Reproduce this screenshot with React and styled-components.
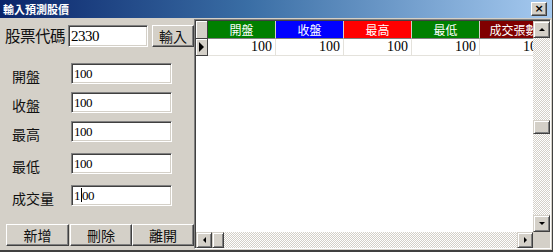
import styled, { createGlobalStyle } from "styled-components";

const GlobalStyle = createGlobalStyle`
  html, body {
    margin: 0;
    padding: 0;
    background: #d4d0c8;
  }
`;

const Window = styled.div`
  width: 553px;
  height: 252px;
  box-sizing: border-box;
  background: #d4d0c8;
  border-right: 1px solid #404040;
  border-bottom: 2px solid #404040;
  display: flex;
  flex-direction: column;
  font-family: "Noto Sans CJK TC", "Noto Sans", sans-serif;
  overflow: hidden;
`;

const TitleBar = styled.div`
  height: 18px;
  flex: none;
  display: flex;
  align-items: center;
  justify-content: space-between;
  padding: 0 4px 0 3px;
  background: linear-gradient(to right, #0a246a, #3a6ea5 45%, #a6caf0);
  color: #fff;
  font-size: 11px;
  font-weight: bold;
  line-height: 18px;
`;

const CloseButton = styled.div`
  width: 16px;
  height: 14px;
  box-sizing: border-box;
  background: #d4d0c8;
  border-top: 1px solid #fff;
  border-left: 1px solid #fff;
  border-right: 1px solid #404040;
  border-bottom: 1px solid #404040;
  box-shadow: inset -1px -1px #808080;
  color: #000;
  font-family: "DejaVu Sans", sans-serif;
  font-size: 11px;
  font-weight: bold;
  line-height: 11px;
  text-align: center;
  margin-right: 1px;
`;

const Body = styled.div`
  flex: 1;
  display: flex;
  min-height: 0;
`;

const LeftPanel = styled.div`
  width: 194px;
  flex: none;
  display: flex;
  flex-direction: column;
  box-sizing: border-box;
  padding: 7px 0 0 5px;
`;

const CodeRow = styled.div`
  display: flex;
  align-items: center;
  height: 21px;
`;

const CodeLabel = styled.div`
  width: 63px;
  font-size: 15.5px;
  line-height: 21px;
  color: #111;
  letter-spacing: -0.5px;
`;

const TextBox = styled.div`
  width: ${(p) => p.$width}px;
  height: ${(p) => p.$height}px;
  box-sizing: border-box;
  background: #fff;
  border-top: 1px solid #808080;
  border-left: 1px solid #808080;
  border-right: 1px solid #fff;
  border-bottom: 1px solid #fff;
  box-shadow: inset 1px 1px #404040, inset -1px -1px #d4d0c8;
  padding-left: 2px;
  font-family: "Liberation Serif", serif;
  font-size: ${(p) => p.$size}px;
  line-height: ${(p) => p.$height - 2}px;
  color: #000;
  letter-spacing: -0.5px;
  white-space: nowrap;
  overflow: hidden;
  display: flex;
  align-items: center;
`;

const Caret = styled.span`
  display: inline-block;
  width: 1px;
  height: 14px;
  background: #000;
  margin: 0 0.5px 0 0.5px;
`;

const Button = styled.div`
  width: ${(p) => p.$width}px;
  height: ${(p) => p.$height}px;
  box-sizing: border-box;
  background: #d4d0c8;
  border-top: 1px solid #fff;
  border-left: 1px solid #fff;
  border-right: 1px solid #404040;
  border-bottom: 1px solid #404040;
  box-shadow: inset -1px -1px #808080;
  display: flex;
  align-items: center;
  justify-content: center;
  font-size: 14px;
  color: #111;
  margin-left: ${(p) => p.$left || 0}px;
`;

const FieldList = styled.div`
  display: flex;
  flex-direction: column;
  padding-left: 7px;
`;

const FieldRow = styled.div`
  display: flex;
  align-items: center;
  height: 20px;
  margin-top: ${(p) => p.$top}px;
`;

const FieldLabel = styled.div`
  width: 59px;
  font-size: 14px;
  color: #111;
  line-height: 20px;
  padding-top: 5px;
`;

const ButtonRow = styled.div`
  display: flex;
  margin-top: 19px;
  padding-left: 1px;
`;

const GridFrame = styled.div`
  width: 357px;
  height: 230px;
  margin-top: 1px;
  box-sizing: border-box;
  border-top: 1px solid #808080;
  border-left: 1px solid #808080;
  border-right: 1px solid #fff;
  border-bottom: 1px solid #fff;
  box-shadow: inset 1px 1px #404040;
  padding: 1px 0 0 1px;
  display: flex;
  flex-direction: column;
  background: #fff;
`;

const GridTop = styled.div`
  flex: 1;
  display: flex;
  min-height: 0;
`;

const Cells = styled.div`
  flex: 1;
  overflow: hidden;
  background: #fff;
`;

const Row = styled.div`
  display: flex;
  height: ${(p) => p.$height}px;
  white-space: nowrap;
`;

const Selector = styled.div`
  width: 12px;
  flex: none;
  box-sizing: border-box;
  background: #d4d0c8;
  border-right: 1px solid #404040;
  border-bottom: 1px solid #404040;
  box-shadow: inset 1px 1px #fff;
  display: flex;
  align-items: center;
  justify-content: center;
`;

const HeaderCell = styled.div`
  width: 68px;
  flex: none;
  box-sizing: border-box;
  background: ${(p) => p.$color};
  border-right: 1px solid #d4d0c8;
  border-bottom: 1px solid #808080;
  color: #fff;
  font-size: 12px;
  line-height: 17px;
  text-align: center;
  overflow: hidden;
`;

const DataCell = styled.div`
  width: 68px;
  flex: none;
  box-sizing: border-box;
  border-right: 1px solid #e4e2dc;
  border-bottom: 1px solid #e4e2dc;
  font-family: "Liberation Serif", serif;
  font-size: 14px;
  line-height: 16px;
  text-align: right;
  padding-right: 3px;
  color: #000;
  overflow: hidden;
`;

const VScroll = styled.div`
  width: 17px;
  flex: none;
  display: flex;
  flex-direction: column;
  background: repeating-conic-gradient(#d4d0c8 0% 25%, #ffffff 0% 50%) 0 0 / 2px 2px;
`;

const ScrollButton = styled.div`
  width: ${(p) => p.$w}px;
  height: ${(p) => p.$h}px;
  flex: none;
  box-sizing: border-box;
  background: #d4d0c8;
  border-top: 1px solid #d4d0c8;
  border-left: 1px solid #d4d0c8;
  border-right: 1px solid #404040;
  border-bottom: 1px solid #404040;
  box-shadow: inset 1px 1px #fff, inset -1px -1px #808080;
  display: flex;
  align-items: center;
  justify-content: center;
`;

const Track = styled.div`
  flex: ${(p) => (p.$fixed ? "none" : 1)};
  ${(p) => (p.$fixed ? `height: ${p.$fixed}px;` : "")}
`;

const GridBottom = styled.div`
  height: 16px;
  flex: none;
  display: flex;
`;

const HScroll = styled.div`
  flex: 1;
  display: flex;
  background: repeating-conic-gradient(#d4d0c8 0% 25%, #ffffff 0% 50%) 0 0 / 2px 2px;
`;

const Corner = styled.div`
  width: 17px;
  flex: none;
  background: #d4d0c8;
`;

const Arrow = ({ dir, size = 4 }) => {
  const s = size;
  const pts = {
    up: `0,${s} ${s},0 ${2 * s},${s}`,
    down: `0,0 ${s},${s} ${2 * s},0`,
    left: `${s},0 0,${s} ${s},${2 * s}`,
    right: `0,0 ${s},${s} 0,${2 * s}`,
  }[dir];
  const vertical = dir === "up" || dir === "down";
  return (
    <svg width={vertical ? 2 * s : s} height={vertical ? s : 2 * s}>
      <polygon points={pts} fill="#000" />
    </svg>
  );
};

const headers = [
  { text: "開盤", color: "#008000" },
  { text: "收盤", color: "#0000ff" },
  { text: "最高", color: "#ff0000" },
  { text: "最低", color: "#008000" },
  { text: "成交張數", color: "#800000" },
];

const fields = [
  { label: "開盤", value: "100", top: 17 },
  { label: "收盤", value: "100", top: 9 },
  { label: "最高", value: "100", top: 9 },
  { label: "最低", value: "100", top: 12 },
  { label: "成交量", value: "100", top: 12, caret: true },
];

function App() {
  return (
    <>
      <GlobalStyle />
      <Window>
        <TitleBar>
          <span>輸入預測股價</span>
          <CloseButton>×</CloseButton>
        </TitleBar>
        <Body>
          <LeftPanel>
            <CodeRow>
              <CodeLabel>股票代碼</CodeLabel>
              <TextBox $width={80} $height={22} $size={15}>
                2330
              </TextBox>
              <Button $width={42} $height={22} $left={4}>
                輸入
              </Button>
            </CodeRow>
            <FieldList>
              {fields.map((f) => (
                <FieldRow key={f.label} $top={f.top}>
                  <FieldLabel>{f.label}</FieldLabel>
                  <TextBox $width={101} $height={21} $size={13}>
                    {f.caret ? (
                      <>
                        1<Caret />
                        00
                      </>
                    ) : (
                      f.value
                    )}
                  </TextBox>
                </FieldRow>
              ))}
            </FieldList>
            <ButtonRow>
              <Button $width={63} $height={22}>新增</Button>
              <Button $width={62} $height={22} $left={1}>刪除</Button>
              <Button $width={62} $height={22}>離開</Button>
            </ButtonRow>
          </LeftPanel>
          <GridFrame>
            <GridTop>
              <Cells>
                <Row $height={18}>
                  <Selector />
                  {headers.map((h) => (
                    <HeaderCell key={h.text} $color={h.color}>
                      {h.text}
                    </HeaderCell>
                  ))}
                </Row>
                <Row $height={17}>
                  <Selector>
                    <Arrow dir="right" size={5} />
                  </Selector>
                  {headers.map((h) => (
                    <DataCell key={h.text}>100</DataCell>
                  ))}
                </Row>
              </Cells>
              <VScroll>
                <ScrollButton $w={17} $h={17}>
                  <Arrow dir="up" size={3} />
                </ScrollButton>
                <Track $fixed={82} />
                <ScrollButton $w={17} $h={14} />
                <Track />
                <ScrollButton $w={17} $h={17}>
                  <Arrow dir="down" size={3} />
                </ScrollButton>
              </VScroll>
            </GridTop>
            <GridBottom>
              <HScroll>
                <ScrollButton $w={16} $h={16}>
                  <Arrow dir="left" size={3} />
                </ScrollButton>
                <ScrollButton $w={12} $h={16} />
                <Track />
                <ScrollButton $w={16} $h={16}>
                  <Arrow dir="right" size={3} />
                </ScrollButton>
              </HScroll>
              <Corner />
            </GridBottom>
          </GridFrame>
        </Body>
      </Window>
    </>
  );
}

export default App;
